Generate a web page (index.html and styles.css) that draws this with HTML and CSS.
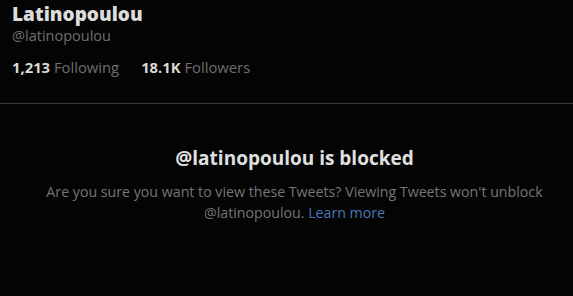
FILE: index.html
```html
<!DOCTYPE html>
<html lang="en">
<head>
    <meta charset="UTF-8">
    <meta name="viewport" content="width=device-width, initial-scale=1.0">
    <title>Latinopoulou</title>
    <link rel="stylesheet" href="styles.css">
</head>
<body>
    <div class="profile">
        <div class="profile-name">Latinopoulou</div>
        <div class="profile-handle">@latinopoulou</div>
        <div class="profile-stats">
            <span class="stat"><b>1,213</b> Following</span>
            <span class="stat"><b>18.1K</b> Followers</span>
        </div>
    </div>
    <div class="blocked">
        <h1>@latinopoulou is blocked</h1>
        <p>Are you sure you want to view these Tweets? Viewing Tweets won't unblock<br>@latinopoulou. <a href="#" class="learn-more">Learn more</a></p>
    </div>
</body>
</html>
```

FILE: styles.css
```css
* {
    margin: 0;
    padding: 0;
    box-sizing: border-box;
}

body {
    font-family: 'Open Sans', sans-serif;
    background-color: #040404;
    color: #d9d9d9;
    height: 296px;
    overflow: hidden;
}

.profile {
    padding: 1px 12px 0;
    height: 104px;
    border-bottom: 1px solid #3a3a3a;
}

.profile-name {
    font-size: 19px;
    font-weight: 800;
    color: #dcdcdc;
    line-height: 26px;
}

.profile-handle {
    font-size: 14.5px;
    color: #6f6f6f;
    line-height: 18px;
}

.profile-stats {
    display: flex;
    gap: 22px;
    margin-top: 12px;
    font-size: 14.8px;
    line-height: 20px;
    color: #6f6f6f;
}

.profile-stats b {
    color: #d9d9d9;
}

.blocked {
    padding: 41px 0 0 16px;
    text-align: center;
}

.blocked h1 {
    font-size: 19px;
    font-weight: bold;
    color: #e0e0e0;
    line-height: 26px;
    margin-bottom: 10px;
}

.blocked p {
    font-size: 14.2px;
    line-height: 21px;
    color: #767676;
}

.learn-more {
    color: #4a78b8;
    text-decoration: none;
}
```
